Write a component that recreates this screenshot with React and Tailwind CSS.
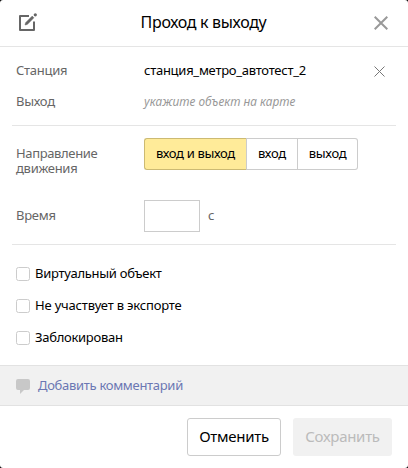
import React from "react";

function Cross({ className, size, stroke, width, inset }) {
  const far = size - inset;
  return (
    <svg className={className} width={size} height={size} viewBox={`0 0 ${size} ${size}`} fill="none">
      <path d={`M${inset} ${inset}L${far} ${far}M${far} ${inset}L${inset} ${far}`} stroke={stroke} strokeWidth={width} />
    </svg>
  );
}

function EditIcon() {
  return (
    <svg className="shrink-0 overflow-visible" width="19" height="19" viewBox="0 0 19 19" fill="none">
      <path d="M11 3H2V17H16V8.5" stroke="#666" strokeWidth="2" strokeLinejoin="round" />
      <path d="M7 12L7.6 9.7L14.2 3.1L15.9 4.8L9.3 11.4Z" fill="#666" stroke="#666" strokeWidth="0.5" />
      <circle cx="17.3" cy="1.8" r="1.6" fill="#666" />
    </svg>
  );
}

function Checkbox({ label, labelClass }) {
  return (
    <label className="flex h-8 items-center">
      <span className="size-3.5 rounded-[2.5px] border border-[#ccc] bg-white" />
      <span className={`ml-[5px] pb-0.5 ${labelClass}`}>{label}</span>
    </label>
  );
}

export default function App() {
  return (
    <div className="h-[468px] w-[408px] bg-black">
      <div className="flex h-full flex-col overflow-hidden rounded-[3px] bg-white font-['Noto_Sans',sans-serif] text-[13px] leading-[15px] tracking-[-0.28px] text-black">
        <header className="flex h-[47px] shrink-0 items-center justify-between border-b border-[#e5e5e5] pr-5 pl-[18px]">
          <div className="flex w-[15px] pb-px"><EditIcon /></div>
          <h1 className="pb-0.5 text-[16px] leading-5 tracking-[-0.32px]">Проход к выходу</h1>
          <Cross size={14} stroke="#999" width={2} inset={0.7} />
        </header>

        <section className="mx-3 flex h-[79px] shrink-0 flex-col border-b border-[#e5e5e5] px-1 pt-2">
          <div className="flex h-[31px] items-center">
            <span className="w-32 text-[#666]">Станция</span>
            <span className="tracking-[-0.26px]">станция_метро_автотест_2</span>
            <Cross className="mt-px mr-[7px] ml-auto" size={11} stroke="#777" width={1} inset={0.5} />
          </div>
          <div className="flex h-[31px] items-center">
            <span className="w-32 text-[#666]">Выход</span>
            <span className="origin-left scale-x-[0.91] tracking-normal text-[#999] italic">укажите объект на карте</span>
          </div>
        </section>

        <section className="mx-3 h-[119px] shrink-0 border-b border-[#e5e5e5] px-1 pt-3">
          <div className="flex h-[62px] items-start">
            <span className="w-32 pt-2 text-[#666]">
              <span className="tracking-[-0.36px]">Направление</span><br />движения
            </span>
            <div className="flex h-8">
              <button className="w-[102px] rounded-l-[3px] border border-r-0 border-[#ccba73] bg-[#ffeb99] pb-0.5 tracking-[-0.33px]">вход и выход</button>
              <button className="w-[52px] border border-[#ccc] pb-0.5">вход</button>
              <button className="w-[60px] rounded-r-[3px] border border-l-0 border-[#ccc] pb-0.5">выход</button>
            </div>
          </div>
          <div className="flex h-8 items-center text-[#666]">
            <span className="w-32 pb-0.5">Время</span>
            <input className="h-8 w-14 border border-[#ccc] bg-white" />
            <span className="ml-2 pb-0.5">с</span>
          </div>
        </section>

        <section className="h-[120px] shrink-0 px-4 pt-[13px]">
          <Checkbox label="Виртуальный объект" labelClass="tracking-[-0.28px]" />
          <Checkbox label="Не участвует в экспорте" labelClass="tracking-[-0.18px]" />
          <Checkbox label="Заблокирован" labelClass="tracking-[-0.28px]" />
        </section>

        <button className="flex h-[41px] shrink-0 items-center border-y border-[#e2e2e2] bg-[#f1f1f1] px-4 text-[#6b77b3]">
          <svg className="mt-0.5" width="14" height="15" viewBox="0 0 14 15" fill="#c8c8c8">
            <path d="M2 0H12Q14 0 14 2V9Q14 11 12 11H8L4 15V11H2Q0 11 0 9V2Q0 0 2 0Z" />
          </svg>
          <span className="ml-2 tracking-[-0.3px]">Добавить комментарий</span>
        </button>

        <footer className="flex justify-end gap-3 pt-3 pr-4 text-[15px]">
          <button className="h-[38px] w-[94px] rounded-[3px] border border-[#ccc] pb-0.5">Отменить</button>
          <button className="h-[38px] w-[99px] rounded-[3px] bg-[#f1f1f1] pb-0.5 text-[#bbb]" disabled>Сохранить</button>
        </footer>
      </div>
    </div>
  );
}
